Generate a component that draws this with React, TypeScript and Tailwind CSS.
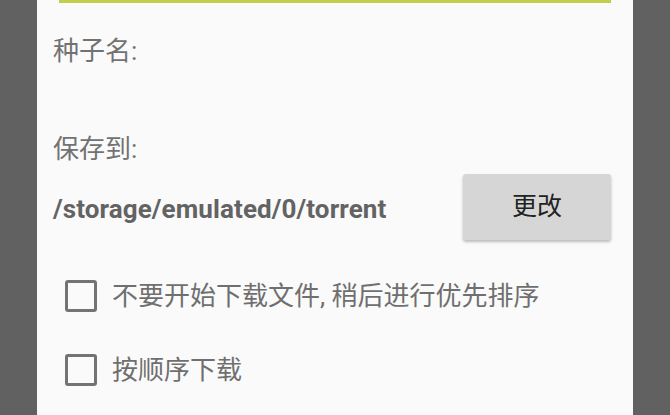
import React from "react";

const font = { fontFamily: 'Roboto, "Noto Sans CJK SC", sans-serif' };

const CheckRow = ({ label }: { label: string }) => (
  <div className="flex items-center h-[34px]">
    <div className="w-[32px] h-[32px] border-[3px] border-[#737373] rounded-[3px] shrink-0" />
    <span className="ml-[15px] text-[26px] leading-none text-[#6f6f6f]">{label}</span>
  </div>
);

export default function App() {
  return (
    <div className="flex w-[670px] h-[415px] bg-[#616161] overflow-hidden" style={font}>
      <div className="w-[37px] shrink-0" />
      <div className="w-[596px] h-full bg-[#fafafa] flex flex-col">
        {/* underline of the name field */}
        <div className="mx-[22px] h-[3px] bg-[#c5cd4c]" />

        <div className="pl-[16px] mt-[35px] text-[26px] leading-none text-[#727272]">种子名:</div>

        <div className="pl-[16px] mt-[72px] text-[26px] leading-none text-[#727272]">保存到:</div>

        <div className="flex items-center justify-between pl-[16px] pr-[22px] mt-[12px]">
          <span className="pt-[4px] text-[26px] font-bold text-[#636363] leading-none tracking-[0.1px]">
            /storage/emulated/0/torrent
          </span>
          <button className="w-[148px] h-[66px] bg-[#d6d6d6] rounded-[3px] shadow-[0_2px_3px_rgba(0,0,0,0.25)] text-[25px] text-[#222]">
            更改
          </button>
        </div>

        <div className="pl-[28px] mt-[39px] flex flex-col gap-[40px]">
          <CheckRow label="不要开始下载文件, 稍后进行优先排序" />
          <CheckRow label="按顺序下载" />
        </div>
      </div>
      <div className="flex-1" />
    </div>
  );
}
